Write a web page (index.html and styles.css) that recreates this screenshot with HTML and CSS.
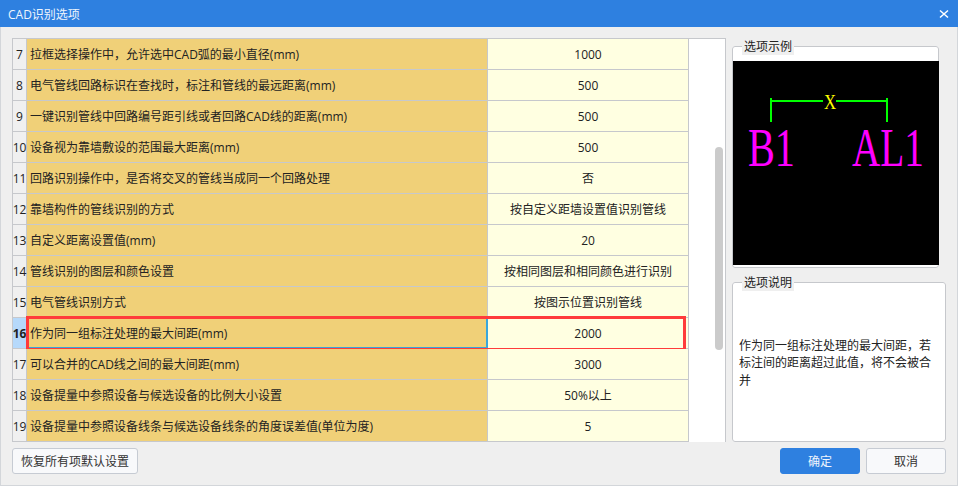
FILE: index.html
```html
<!DOCTYPE html>
<html lang="zh-CN">
<head>
<meta charset="utf-8">
<title>CAD识别选项</title>
<link rel="stylesheet" href="styles.css">
</head>
<body>
<div class="window">
  <header class="titlebar">
    <span class="title">CAD识别选项</span>
    <svg class="close" width="10" height="10" viewBox="0 0 10 10"><path d="M1 1.5 L9 8.5 M9 1.5 L1 8.5" stroke="#fff" stroke-width="1.5" fill="none"/></svg>
  </header>
  <div class="content">
    <div class="main">
      <div class="grid">
        <div class="rows">
          <div class="row"><div class="num">7</div><div class="name">拉框选择操作中，允许选中CAD弧的最小直径(mm)</div><div class="val">1000</div></div>
          <div class="row"><div class="num">8</div><div class="name">电气管线回路标识在查找时，标注和管线的最远距离(mm)</div><div class="val">500</div></div>
          <div class="row"><div class="num">9</div><div class="name">一键识别管线中回路编号距引线或者回路CAD线的距离(mm)</div><div class="val">500</div></div>
          <div class="row"><div class="num">10</div><div class="name">设备视为靠墙敷设的范围最大距离(mm)</div><div class="val">500</div></div>
          <div class="row"><div class="num">11</div><div class="name">回路识别操作中，是否将交叉的管线当成同一个回路处理</div><div class="val">否</div></div>
          <div class="row"><div class="num">12</div><div class="name">靠墙构件的管线识别的方式</div><div class="val">按自定义距墙设置值识别管线</div></div>
          <div class="row"><div class="num">13</div><div class="name">自定义距离设置值(mm)</div><div class="val">20</div></div>
          <div class="row"><div class="num">14</div><div class="name">管线识别的图层和颜色设置</div><div class="val">按相同图层和相同颜色进行识别</div></div>
          <div class="row"><div class="num">15</div><div class="name">电气管线识别方式</div><div class="val">按图示位置识别管线</div></div>
          <div class="row current"><div class="num">16</div><div class="name">作为同一组标注处理的最大间距(mm)</div><div class="val">2000</div><div class="highlight"></div></div>
          <div class="row"><div class="num">17</div><div class="name">可以合并的CAD线之间的最大间距(mm)</div><div class="val">3000</div></div>
          <div class="row"><div class="num">18</div><div class="name">设备提量中参照设备与候选设备的比例大小设置</div><div class="val">50%以上</div></div>
          <div class="row"><div class="num">19</div><div class="name">设备提量中参照设备线条与候选设备线条的角度误差值(单位为度)</div><div class="val">5</div></div>
        </div>
        <div class="scroll"><div class="thumb"></div></div>
      </div>
      <aside class="side">
        <fieldset class="group sample">
          <legend>选项示例</legend>
          <svg class="preview" width="206" height="204" viewBox="733 61 206 204">
            <rect x="733" y="61" width="206" height="204" fill="#000"/>
            <path d="M771 101 H823 M836 101 H887 M771 98 V122 M887 98 V122" stroke="#00ff00" stroke-width="2" fill="none"/>
            <text class="cad-x" transform="translate(824 109) scale(.8 1)">X</text>
            <text class="cad-b" transform="translate(748 166) scale(.746 1)">B1</text>
            <text class="cad-b" transform="translate(852 166) scale(.727 1)">AL1</text>
          </svg>
        </fieldset>
        <fieldset class="group info">
          <legend>选项说明</legend>
          <p class="desc">作为同一组标注处理的最大间距，若标注间的距离超过此值，将不会被合并</p>
        </fieldset>
      </aside>
    </div>
    <footer class="bottom">
      <button class="btn reset">恢复所有项默认设置</button>
      <div class="actions">
        <button class="btn primary">确定</button>
        <button class="btn cancel">取消</button>
      </div>
    </footer>
  </div>
</div>
</body>
</html>
```
FILE: styles.css
```css
* { box-sizing: border-box; }
html, body { margin: 0; padding: 0; }
body {
  width: 958px;
  height: 486px;
  overflow: hidden;
  font-family: "Open Sans", "Noto Sans CJK SC", sans-serif;
  font-size: 12px;
  color: #222;
  background: #efefef;
}
.window { display: flex; flex-direction: column; height: 486px; }
.titlebar {
  height: 27px;
  flex: none;
  display: flex;
  align-items: center;
  justify-content: space-between;
  padding: 0 9px 0 8px;
  background: #2e80e0;
  color: #fff;
}
.title { font-size: 12px; color: #eef5fd; }
.content {
  flex: 1;
  display: flex;
  flex-direction: column;
  border: 1px solid #d3d6da;
  border-top: 0;
  padding: 11px 11px 0 11px;
}
.main { display: flex; height: 404px; flex: none; }
.grid {
  width: 714px;
  height: 404px;
  flex: none;
  display: flex;
  justify-content: space-between;
  background: #fff;
  border: 1px solid #c6c8cc;
  border-bottom: 0;
}
.rows { display: flex; flex-direction: column; width: 676px; }
.row {
  position: relative;
  display: flex;
  height: 31px;
  flex: none;
  line-height: 32px;
  white-space: nowrap;
}
.num, .name, .val { border-bottom: 1px solid #c6c8cc; border-right: 1px solid #c6c8cc; }
.num { width: 14px; background: #f0f0f0; display: flex; justify-content: center; color: #222; }
.name { width: 461px; background: #f0d078; padding-left: 3px; }
.val { width: 201px; background: #ffffe1; text-align: center; }
.current .num { background: #b6d9fb; font-weight: 700; }
.current .name { border-right-color: #38a6dc; box-shadow: inset -1px -1px 0 #38a6dc; }
.highlight {
  position: absolute;
  left: 13px;
  top: -2px;
  width: 660px;
  height: 35px;
  border: 3px solid #ff3b3b;
}
.scroll { width: 36px; padding: 108px 2px 0 26px; }
.thumb { width: 8px; height: 203px; border-radius: 4px; background: #cbcbcb; }
.side { margin-left: 6px; width: 214px; flex: none; display: flex; flex-direction: column; }
.group {
  margin: 0;
  padding: 0;
  min-width: 0;
  border: 1px solid #c6c8cc;
  border-radius: 3px;
  background: #fff;
}
.group legend {
  margin-left: 9px;
  padding: 0 2px;
  line-height: 17px;
  font-size: 12px;
  background: #efefef;
}
.sample { width: 207px; height: 230px; }
.preview { display: block; margin-top: 6px; }
.info { width: 214px; height: 168px; margin-top: 6px; display: flex; align-items: center; }
.desc { margin: 0; padding: 0 6px; height: 144px; display: flex; align-items: center; line-height: 17.5px; }
.cad-x { font-family: "Liberation Serif", serif; font-size: 21px; fill: #ffff00; }
.cad-b { font-family: "Liberation Serif", serif; font-size: 54px; fill: #ff00ff; }
.bottom { display: flex; justify-content: space-between; margin-top: 6px; }
.actions { display: flex; gap: 6px; }
.btn {
  height: 26px;
  padding: 0;
  font: inherit;
  font-size: 12px;
  color: #333;
  background: #f8f9fb;
  border: 1px solid #c6cbd3;
  border-radius: 3px;
}
.reset { width: 126px; }
.primary { width: 80px; background: #2e80e0; border-color: #2e80e0; color: #eef5fd; }
.cancel { width: 80px; }
```
